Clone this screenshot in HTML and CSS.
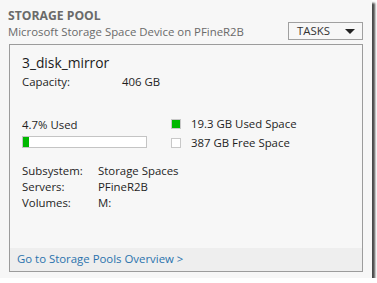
FILE: index.html
```html
<!DOCTYPE html>
<html>
<head>
<meta charset="utf-8">
<link rel="stylesheet" href="styles.css">
</head>
<body>
<div class="window">
  <div class="header">
    <div class="heading">
      <div class="title">STORAGE POOL</div>
      <div class="subtitle">Microsoft Storage Space Device on PFineR2B</div>
    </div>
    <div class="tasks"><span class="tasks-label">TASKS</span><span class="caret"></span></div>
  </div>
  <div class="card">
    <div class="card-body">
      <div class="name">3_disk_mirror</div>
      <div class="kv cap-row"><span class="cap-label">Capacity:</span><span>406 GB</span></div>
      <div class="usage">
        <div class="usage-left">
          <div class="used-label">4.7% Used</div>
          <div class="bar"><div class="bar-fill" style="width:4.7%"></div></div>
        </div>
        <div class="legend">
          <div class="legend-row"><span class="swatch swatch-used"></span><span>19.3 GB Used Space</span></div>
          <div class="legend-row"><span class="swatch"></span><span>387 GB Free Space</span></div>
        </div>
      </div>
      <div class="details">
        <span class="d-label">Subsystem:</span><span>Storage Spaces</span>
        <span class="d-label">Servers:</span><span>PFineR2B</span>
        <span class="d-label">Volumes:</span><span>M:</span>
      </div>
    </div>
    <div class="footer"><span class="link">Go to Storage Pools Overview &gt;</span></div>
  </div>
</div>
</body>
</html>
```

FILE: styles.css
```css
html, body {
  margin: 0;
  padding: 0;
  background: #ffffff;
}
body {
  font-family: "Open Sans", "Noto Sans", sans-serif;
  font-size: 11.4px;
  color: #1e1e1e;
}
.window {
  width: 372px;
  height: 278px;
  background: #f7f7f7;
  box-shadow: 3px 3px 2px #4a4a4a;
  box-sizing: border-box;
  padding-top: 8px;
  display: flex;
  flex-direction: column;
}
.header {
  display: flex;
  justify-content: space-between;
  align-items: flex-end;
  padding: 0 9px 0 8px;
}
.title {
  font-weight: bold;
  font-size: 12.2px;
  line-height: 16px;
  color: #6a6a6a;
}
.subtitle {
  line-height: 16px;
  color: #6a6a6a;
}
.tasks {
  width: 75px;
  height: 18px;
  box-sizing: border-box;
  border: 1px solid #a0a0a0;
  display: flex;
  align-items: center;
  justify-content: space-between;
  padding: 0 7px 0 8px;
  color: #333;
  line-height: 16px;
}
.caret {
  width: 0;
  height: 0;
  border-left: 5px solid transparent;
  border-right: 5px solid transparent;
  border-top: 5px solid #222;
}
.card {
  margin: 4px 0 0 9px;
  width: 354px;
  height: 228px;
  box-sizing: border-box;
  border: 1px solid #9c9c9c;
  display: flex;
  flex-direction: column;
}
.card-body {
  flex: 1;
  padding: 8px 13px 0 12px;
}
.name {
  font-size: 13.8px;
  line-height: 20px;
  color: #1a1a1a;
}
.kv {
  display: flex;
  line-height: 16px;
  margin-top: 1px;
}
.cap-label {
  width: 100px;
}
.usage {
  display: flex;
  margin-top: 27px;
}
.usage-left {
  width: 149px;
}
.used-label {
  line-height: 16px;
}
.bar {
  margin-top: 3px;
  width: 125px;
  height: 12px;
  box-sizing: border-box;
  border: 1px solid #c4c4c4;
  background: #ffffff;
}
.bar-fill {
  height: 100%;
  background: #00b800;
}
.legend {
  display: flex;
  flex-direction: column;
  gap: 3px;
  margin-top: -1px;
}
.legend-row {
  display: flex;
  align-items: center;
  gap: 10px;
  line-height: 16px;
}
.swatch {
  width: 10px;
  height: 10px;
  box-sizing: border-box;
  border: 1px solid #c8c8c8;
  background: #ffffff;
}
.swatch-used {
  background: #00b800;
}
.details {
  display: grid;
  grid-template-columns: 76px auto;
  line-height: 16px;
  margin-top: 12px;
}
.footer {
  height: 23px;
  background: #eeeeee;
  padding: 3px 0 0 7px;
  box-sizing: border-box;
  line-height: 16px;
}
.link {
  color: #2a72ad;
}
```
